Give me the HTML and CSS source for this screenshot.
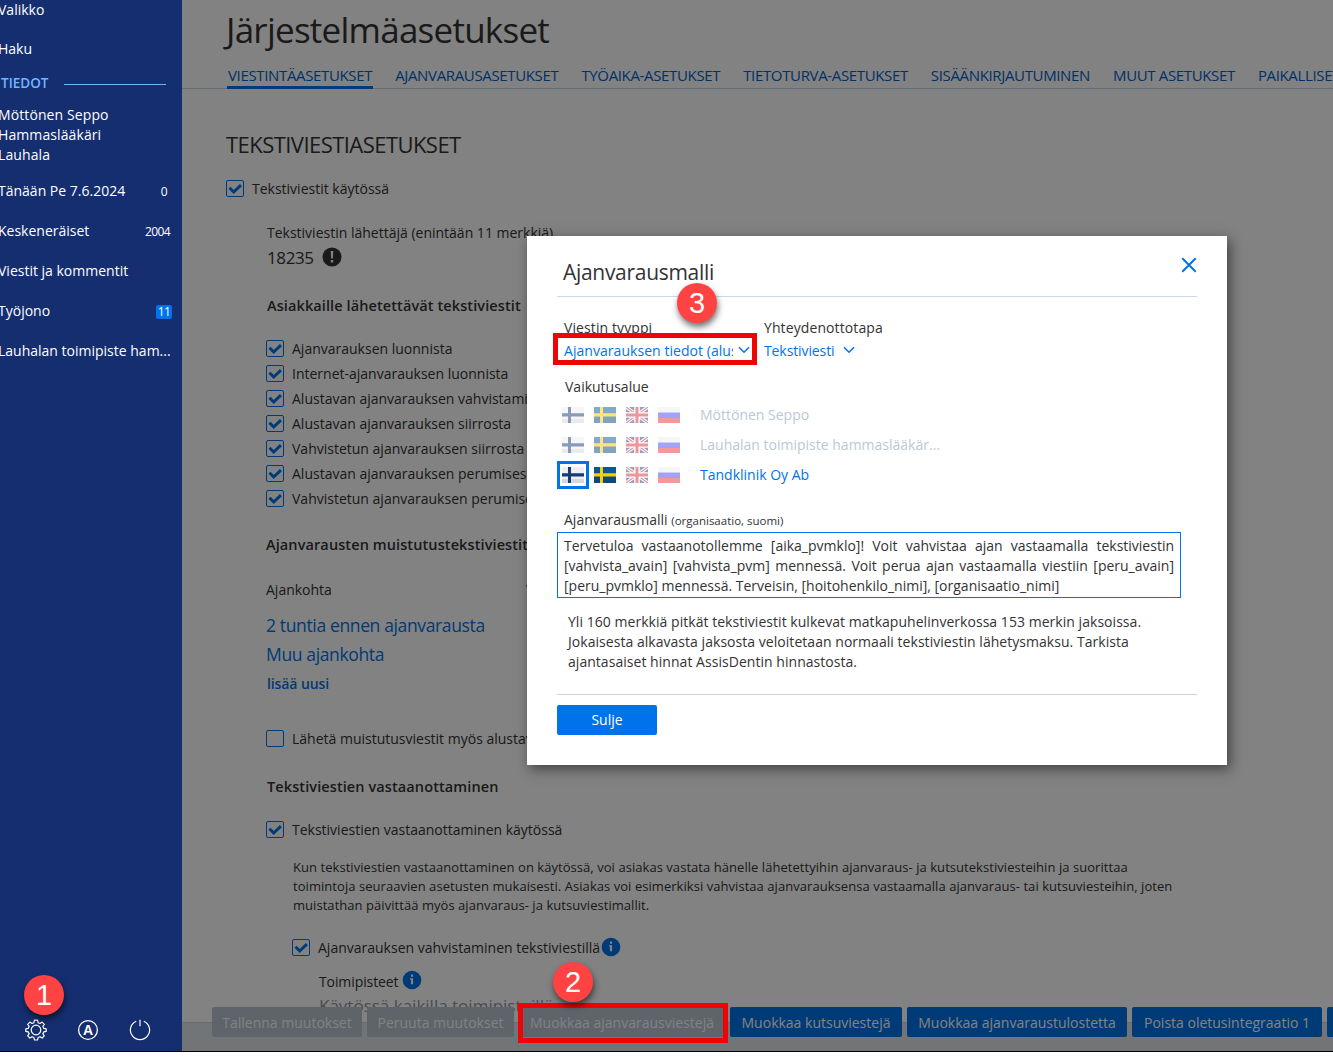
FILE: index.html
```html
<!DOCTYPE html>
<html lang="fi">
<head>
  <meta charset="utf-8">
  <title>Järjestelmäasetukset</title>
  <link rel="stylesheet" href="styles.css">
</head>
<body>

<!-- shared shapes -->
<svg class="defs" width="0" height="0">
  <symbol id="check" viewBox="0 0 16 15"><path d="M2.5 6.8l4.200 4.200 7.200-6.800" fill="none" stroke="#0073ea" stroke-width="3"/></symbol>
  <symbol id="chevron" viewBox="0 0 12 8"><path d="M1 1.200l5 5 5-5" fill="none" stroke="#0073ea" stroke-width="1.500"/></symbol>
  <symbol id="info" viewBox="0 0 20 20"><circle cx="10" cy="10" r="9.300" fill="#0073ea"/><path d="M8 8.200h3.100v6H8.900V9.600H8zM8.900 4.600h2.200v2.200H8.900z" fill="#fff"/></symbol>
  <symbol id="fi" viewBox="0 0 22 16"><path fill="#eeeef1" d="M0 0h22v16H0z"/><path fill="#d6d7dc" d="M0 12h22v4H0z"/><path fill="#173a78" d="M0 6.300h22v3.200H0zM6 0h3v16H6z"/></symbol>
  <symbol id="se" viewBox="0 0 22 16"><path fill="#0a5796" d="M0 0h22v16H0z"/><path fill="#084a7e" d="M0 9h22v7H0z"/><path fill="#fc0" d="M0 6.300h22v3.200H0zM6 0h3v16H6z"/></symbol>
  <symbol id="gb" viewBox="0 0 22 16"><path fill="#2b4590" d="M0 0h22v16H0z"/><path d="M0 0l22 16M22 0L0 16" stroke="#fff" stroke-width="3.400"/><path d="M0 0l22 16M22 0L0 16" stroke="#d8303a" stroke-width="1.300"/><path fill="#fff" d="M0 5.200h22v5.600H0zM8.200 0h5.600v16H8.200z"/><path fill="#d8303a" d="M0 6.500h22v3H0zM9.500 0h3v16h-3z"/></symbol>
  <symbol id="ru" viewBox="0 0 22 16"><path fill="#eee" d="M0 0h22v5.500H0z"/><path fill="#4747f5" d="M0 5.500h22V11H0z"/><path fill="#e8333a" d="M0 11h22v5H0z"/></symbol>
</svg>

<div class="app">

  <nav class="sidebar">
    <a class="nav-item first">Valikko</a>
    <a class="nav-item search">Haku</a>
    <div class="nav-title"><b>TIEDOT</b><i></i></div>
    <div class="user">Möttönen Seppo<br>Hammaslääkäri<br>Lauhala</div>
    <a class="nav-item"><span>Tänään Pe 7.6.2024</span><small class="zero">0</small></a>
    <a class="nav-item"><span>Keskeneräiset</span><small>2004</small></a>
    <a class="nav-item"><span>Viestit ja kommentit</span></a>
    <a class="nav-item"><span>Työjono</span><em>11</em></a>
    <a class="nav-item"><span>Lauhalan toimipiste ham...</span></a>
    <div class="nav-icons">
      <svg width="22" height="22" viewBox="0 0 22 22" fill="none" stroke="#fff" stroke-width="1.2" stroke-linejoin="round"><path d="M9.4 1.2h3.2l.5 2.5 1.9.8 2.1-1.4 2.2 2.2-1.4 2.1.8 1.9 2.5.5v2.6l-2.5.5-.8 1.9 1.4 2.1-2.2 2.2-2.1-1.4-1.9.8-.5 2.5H9.4l-.5-2.5-1.9-.8-2.1 1.4-2.2-2.2 1.4-2.1-.8-1.9-2.5-.5V9.8l2.5-.5.8-1.9-1.4-2.1 2.2-2.2L7 4.5l1.9-.8z"/><circle cx="11" cy="11" r="4.8"/></svg>
      <svg width="22" height="22" viewBox="0 0 22 22"><circle cx="11" cy="11" r="9.4" fill="none" stroke="#fff" stroke-width="1.3"/><text class="letter" x="11" y="16" text-anchor="middle">A</text></svg>
      <svg width="22" height="22" viewBox="0 0 22 22" fill="none" stroke="#fff" stroke-width="1.2"><path d="M7.2 2.2a9.6 9.6 0 1 0 7.6 0M11 .8v6.4"/></svg>
    </div>
  </nav>

  <main class="main">
    <h1>Järjestelmäasetukset</h1>
    <div class="tabs">
      <a class="active">VIESTINTÄASETUKSET</a>
      <a>AJANVARAUSASETUKSET</a>
      <a>TYÖAIKA-ASETUKSET</a>
      <a>TIETOTURVA-ASETUKSET</a>
      <a>SISÄÄNKIRJAUTUMINEN</a>
      <a>MUUT ASETUKSET</a>
      <a>PAIKALLISET ASETUKSET</a>
    </div>

    <div class="content">
      <h2>TEKSTIVIESTIASETUKSET</h2>
      <label class="check"><svg class="box"><use href="#check"/></svg><span>Tekstiviestit käytössä</span></label>

      <div class="group">
        <div class="label sender-label">Tekstiviestin lähettäjä (enintään 11 merkkiä)</div>
        <div class="sender"><span>18235</span>
          <svg width="20" height="20" viewBox="0 0 20 20"><circle cx="10" cy="10" r="9.5" fill="#333"/><path d="M8.7 4h2.6l-.4 7.500H9.100zM8.800 13h2.400v2.400H8.800z" fill="#fff"/></svg>
        </div>

        <h3>Asiakkaille lähetettävät tekstiviestit</h3>
        <div class="checks">
          <label class="check"><svg class="box"><use href="#check"/></svg><span>Ajanvarauksen luonnista</span></label>
          <label class="check"><svg class="box"><use href="#check"/></svg><span>Internet-ajanvarauksen luonnista</span></label>
          <label class="check"><svg class="box"><use href="#check"/></svg><span>Alustavan ajanvarauksen vahvistamisesta</span></label>
          <label class="check"><svg class="box"><use href="#check"/></svg><span>Alustavan ajanvarauksen siirrosta</span></label>
          <label class="check"><svg class="box"><use href="#check"/></svg><span>Vahvistetun ajanvarauksen siirrosta</span></label>
          <label class="check"><svg class="box"><use href="#check"/></svg><span>Alustavan ajanvarauksen perumisesta</span></label>
          <label class="check"><svg class="box"><use href="#check"/></svg><span>Vahvistetun ajanvarauksen perumisesta</span></label>
        </div>

        <h3 class="reminders">Ajanvarausten muistutustekstiviestit</h3>
        <div class="when"><span>Ajankohta</span><span>Viesti</span></div>
        <a class="link">2 tuntia ennen ajanvarausta</a>
        <a class="link">Muu ajankohta</a>
        <a class="add">lisää uusi</a>
        <label class="check tentative"><svg class="box"></svg><span>Lähetä muistutusviestit myös alustavista</span></label>

        <h3 class="receive">Tekstiviestien vastaanottaminen</h3>
        <label class="check"><svg class="box"><use href="#check"/></svg><span>Tekstiviestien vastaanottaminen käytössä</span></label>
        <p class="help">Kun tekstiviestien vastaanottaminen on käytössä, voi asiakas vastata hänelle lähetettyihin ajanvaraus- ja kutsutekstiviesteihin ja suorittaa<br>toimintoja seuraavien asetusten mukaisesti. Asiakas voi esimerkiksi vahvistaa ajanvarauksensa vastaamalla ajanvaraus- tai kutsuviesteihin, joten<br>muistathan päivittää myös ajanvaraus- ja kutsuviestimallit.</p>
        <div class="sub">
          <label class="check"><svg class="box"><use href="#check"/></svg><span>Ajanvarauksen vahvistaminen tekstiviestillä</span><svg class="info"><use href="#info"/></svg></label>
          <div class="offices"><span>Toimipisteet</span><svg class="info"><use href="#info"/></svg></div>
          <div class="all">Käytössä kaikilla toimipisteillä</div>
        </div>
      </div>
    </div>

    <footer class="toolbar">
      <button class="off w150">Tallenna muutokset</button>
      <button class="off w147">Peruuta muutokset</button>
      <button class="off w206">Muokkaa ajanvarausviestejä</button>
      <button class="w172">Muokkaa kutsuviestejä</button>
      <button class="w220">Muokkaa ajanvaraustulostetta</button>
      <button class="w190">Poista oletusintegraatio 1</button>
      <button class="w190">Poista oletusintegraatio 2</button>
    </footer>
    <div class="backdrop"></div>
  </main>

  <div class="modal">
    <header>
      <h2>Ajanvarausmalli</h2>
      <svg width="16" height="16" viewBox="0 0 16 16" stroke="#0073ea" stroke-width="2"><path d="M1.3 1.3l13.4 13.4M14.7 1.3L1.3 14.7"/></svg>
    </header>
    <div class="selects">
      <div class="field type"><span>Viestin tyyppi</span><a><b>Ajanvarauksen tiedot (alustava)</b><svg class="chev"><use href="#chevron"/></svg></a></div>
      <div class="field"><span>Yhteydenottotapa</span><a><b>Tekstiviesti</b><svg class="chev"><use href="#chevron"/></svg></a></div>
    </div>
    <div class="scope-title">Vaikutusalue</div>
    <div class="scope">
      <i><svg><use href="#fi"/></svg></i><i><svg><use href="#se"/></svg></i><i><svg><use href="#gb"/></svg></i><i><svg><use href="#ru"/></svg></i>
      <span>Möttönen Seppo</span>
    </div>
    <div class="scope">
      <i><svg><use href="#fi"/></svg></i><i><svg><use href="#se"/></svg></i><i><svg><use href="#gb"/></svg></i><i><svg><use href="#ru"/></svg></i>
      <span>Lauhalan toimipiste hammaslääkär...</span>
    </div>
    <div class="scope current">
      <i class="on picked"><svg><use href="#fi"/></svg></i><i class="on"><svg><use href="#se"/></svg></i><i><svg><use href="#gb"/></svg></i><i><svg><use href="#ru"/></svg></i>
      <span>Tandklinik Oy Ab</span>
    </div>
    <div class="template-title"><span>Ajanvarausmalli</span> <small>(organisaatio, suomi)</small></div>
    <div class="template">
      <div class="full">Tervetuloa vastaanotollemme [aika_pvmklo]! Voit vahvistaa ajan vastaamalla tekstiviestin</div>
      <div class="full">[vahvista_avain] [vahvista_pvm] mennessä. Voit perua ajan vastaamalla viestiin [peru_avain]</div>
      <div>[peru_pvmklo] mennessä. Terveisin, [hoitohenkilo_nimi], [organisaatio_nimi]</div>
    </div>
    <p class="note">Yli 160 merkkiä pitkät tekstiviestit kulkevat matkapuhelinverkossa 153 merkin jaksoissa.<br>Jokaisesta alkavasta jaksosta veloitetaan normaali tekstiviestin lähetysmaksu. Tarkista<br>ajantasaiset hinnat AssisDentin hinnastosta.</p>
    <div class="actions"><button>Sulje</button></div>
  </div>

  <!-- step markers -->
  <div class="frame frame-type"></div>
  <div class="frame frame-edit"></div>
  <div class="step step-1">1</div>
  <div class="step step-2">2</div>
  <div class="step step-3">3</div>
</div>

</body>
</html>
```
FILE: styles.css
```css
* { box-sizing: border-box; }

body {
  margin: 0;
  background: #fff;
  color: #333;
  font-family: "Open Sans", "Noto Sans", sans-serif;
  font-size: 14px;
  line-height: 20px;
}

h1, h2, h3, p { margin: 0; font-weight: 400; }

.defs { position: absolute; }

.app {
  position: relative;
  display: flex;
  width: 1333px;
  height: 1052px;
  border-bottom: 1px solid #000;
  overflow: hidden;
}

/* left navigation */
.sidebar {
  display: flex;
  flex-direction: column;
  flex: none;
  width: 182px;
  height: 1051px;
  padding-right: 11px;
  background: #152e70;
  color: #fff;
}
.sidebar > * { margin-left: -2px; }
.nav-item {
  display: flex;
  justify-content: space-between;
  height: 20px;
  margin-bottom: 20px;
  white-space: nowrap;
}
.nav-item.first { margin-bottom: 19px; }
.nav-item.search { margin-bottom: 14px; }
.nav-item small { font-size: 12px; margin-right: 1px; line-height: 21px; letter-spacing: -.6px; }
.nav-item .zero { margin-right: 4px; }
.nav-item em {
  width: 16px;
  height: 14px;
  margin-top: 4px;
  margin-right: -1px;
  border-radius: 2px;
  background: #0073ea;
  font-size: 12px;
  font-style: normal;
  line-height: 14px;
  letter-spacing: -.5px;
  text-align: center;
}
.nav-title {
  display: flex;
  align-items: center;
  height: 20px;
  margin-bottom: 12px;
  padding-left: 3px;
  color: #6fb7ff;
}
.nav-title b { font-size: 13.5px; font-weight: 600; width: 63px; }
.nav-title i { width: 102px; height: 1px; margin-top: 3px; background: #6fb7ff; }
.user { margin-bottom: 16px; letter-spacing: .1px; }
.nav-icons {
  display: flex;
  gap: 30px;
  margin-top: auto;
  padding: 0 0 10px 27px;
}
.letter { fill: #fff; font: bold 14px "Liberation Sans", sans-serif; }

/* settings page */
.main {
  position: relative;
  display: flex;
  flex-direction: column;
  flex: 1;
  min-width: 0;
  background: #fff;
}
.main h1 {
  height: 60px;
  padding-left: 44px;
  font-size: 35px;
  line-height: 60px;
  letter-spacing: -.75px;
}
.tabs {
  display: flex;
  gap: 21px;
  flex: none;
  height: 29px;
  padding-left: 45px;
  border-bottom: 1px solid #c5d2df;
}
.tabs a {
  height: 29px;
  padding: 5px 1px 0;
  color: #0062c7;
  font-size: 15px;
  letter-spacing: -.35px;
  white-space: nowrap;
}
.tabs .active { border-bottom: 3px solid #0073ea; }

.content {
  flex: 1;
  min-height: 0;
  padding: 40px 0 0 44px;
  overflow: hidden;
}
.content h2 { height: 30px; font-size: 22px; line-height: 30px; letter-spacing: -.55px; }
.check { display: flex; height: 25px; align-items: center; white-space: nowrap; }
.box {
  width: 18px;
  height: 17px;
  margin-right: 8px;
  border: 1px solid #0073ea;
  border-radius: 2px;
}
.content > .check { margin-top: 17px; }
.group { padding-left: 40px; }
.sender-label { margin-top: 22px; padding-left: 1px; }
.sender { display: flex; gap: 8px; height: 30px; align-items: center; font-size: 17px; letter-spacing: -.4px; padding-left: 1px; }
.sender svg { margin-top: -2px; }
.content h3 { height: 20px; margin-top: 23px; font-size: 14.5px; font-weight: 600; letter-spacing: .1px; padding-left: 1px; white-space: nowrap; }
.checks { margin-top: 20px; }
.content .reminders { margin-top: 24px; padding-left: 0; }
.when { display: flex; margin: 25px 0 12px; }
.when span { width: 260px; }
.link { display: block; height: 29px; font-size: 17.5px; line-height: 27px; letter-spacing: -.36px; color: #0073ea; }
.add { display: block; height: 29px; line-height: 28px; font-weight: 600; letter-spacing: -.1px; color: #0073ea; padding-left: 1px; }
.tentative { margin-top: 27px; }
.content .receive { margin-top: 26px; margin-bottom: 20px; }
.help { margin: 16px 0 20px 27px; font-size: 13px; line-height: 19px; letter-spacing: .05px; white-space: nowrap; }
.sub { padding-left: 26px; }
.info { width: 20px; height: 20px; margin: -2px 0 0 1px; }
.offices { display: flex; gap: 3px; margin-top: 12px; padding-left: 27px; letter-spacing: -.1px; }
.all { padding-left: 27px; margin-top: 4px; font-size: 17px; color: #8b959f; }

.toolbar {
  display: flex;
  flex: none;
  gap: 5px;
  height: 29px;
  padding-left: 30px;
  border-top: 1px solid #ccd3da;
  background: #dfe5ea;
}
button {
  flex: none;
  height: 30px;
  padding: 0;
  border: 0;
  border-radius: 2px;
  background: #0073ea;
  color: #fff;
  font: inherit;
  line-height: 30px;
}
.toolbar button { margin-top: -16px; padding-top: 1px; white-space: nowrap; }
.toolbar .off { background: #b9c4ce; color: #fbfdff; }
.w147 { width: 147px; }
.w150 { width: 150px; }
.w172 { width: 172px; }
.w190 { width: 190px; }
.w206 { width: 206px; }
.w220 { width: 220px; }

.backdrop {
  position: absolute;
  inset: 0;
  background: rgba(0, 0, 0, .49);
}

/* dialog */
.modal {
  position: absolute;
  left: 527px;
  top: 236px;
  width: 700px;
  height: 529px;
  padding: 0 30px;
  background: #fff;
  box-shadow: 3px 4px 12px rgba(0, 0, 0, .5);
}
.modal header {
  display: flex;
  justify-content: space-between;
  height: 61px;
  padding: 21px 0 0 6px;
  border-bottom: 1px solid #cbd8e8;
}
.modal h2 { font-size: 21px; line-height: 31px; letter-spacing: -.3px; }
.selects { display: flex; padding: 20px 0 0 7px; }
.type { width: 200px; }
.field span { display: block; height: 22px; line-height: 22px; letter-spacing: .1px; }
.field a { display: flex; height: 24px; align-items: center; color: #0073ea; }
.field b { font-weight: 400; overflow: hidden; letter-spacing: -.1px; white-space: nowrap; }
.type b { width: 169px; letter-spacing: .05px; }
.chev { flex: none; width: 12px; height: 8px; margin: -2px 0 0 8px; }
.type .chev { margin-left: 5px; }
.scope-title { margin: 14px 0 3px 8px; }
.scope { display: flex; align-items: center; height: 30px; color: #bcc8d5; }
.scope i {
  display: flex;
  width: 32px;
  height: 28px;
  border: 3px solid transparent;
  padding: 3px 2px;
}
.scope svg { width: 22px; height: 16px; opacity: .5; }
.scope .on svg { opacity: 1; }
.scope .picked { border-color: #0073ea; }
.scope span { padding-left: 15px; }
.current span { color: #0073ea; }
.template-title { height: 20px; margin: 20px 0 2px 7px; }
.template-title small { font-size: 11.5px; }
.template {
  width: 624px;
  height: 66px;
  padding: 3px 6px;
  border: 1px solid #0073ea;
  white-space: nowrap;
}
.full { text-align-last: justify; }
.note { margin: 14px 0 22px 11px; letter-spacing: .04px; white-space: nowrap; }
.actions { border-top: 1px solid #cbd8e8; padding-top: 10px; }
.actions button { width: 100px; }

/* step markers over the page */
.frame { position: absolute; border: 5px solid #ee0404; }
.frame-type { left: 553px; top: 333px; width: 204px; height: 32px; }
.frame-edit { left: 518px; top: 1003px; width: 210px; height: 40px; }
.step {
  position: absolute;
  width: 40px;
  height: 40px;
  border-radius: 50%;
  background: #ff4343;
  box-shadow: 1px 4px 6px rgba(0, 0, 0, .55);
  color: #fff;
  font: 29px/40px "Liberation Sans", sans-serif;
  text-align: center;
}
.step-1 { left: 24px; top: 975px; }
.step-2 { left: 553px; top: 962px; }
.step-3 { left: 677px; top: 283px; }
```
